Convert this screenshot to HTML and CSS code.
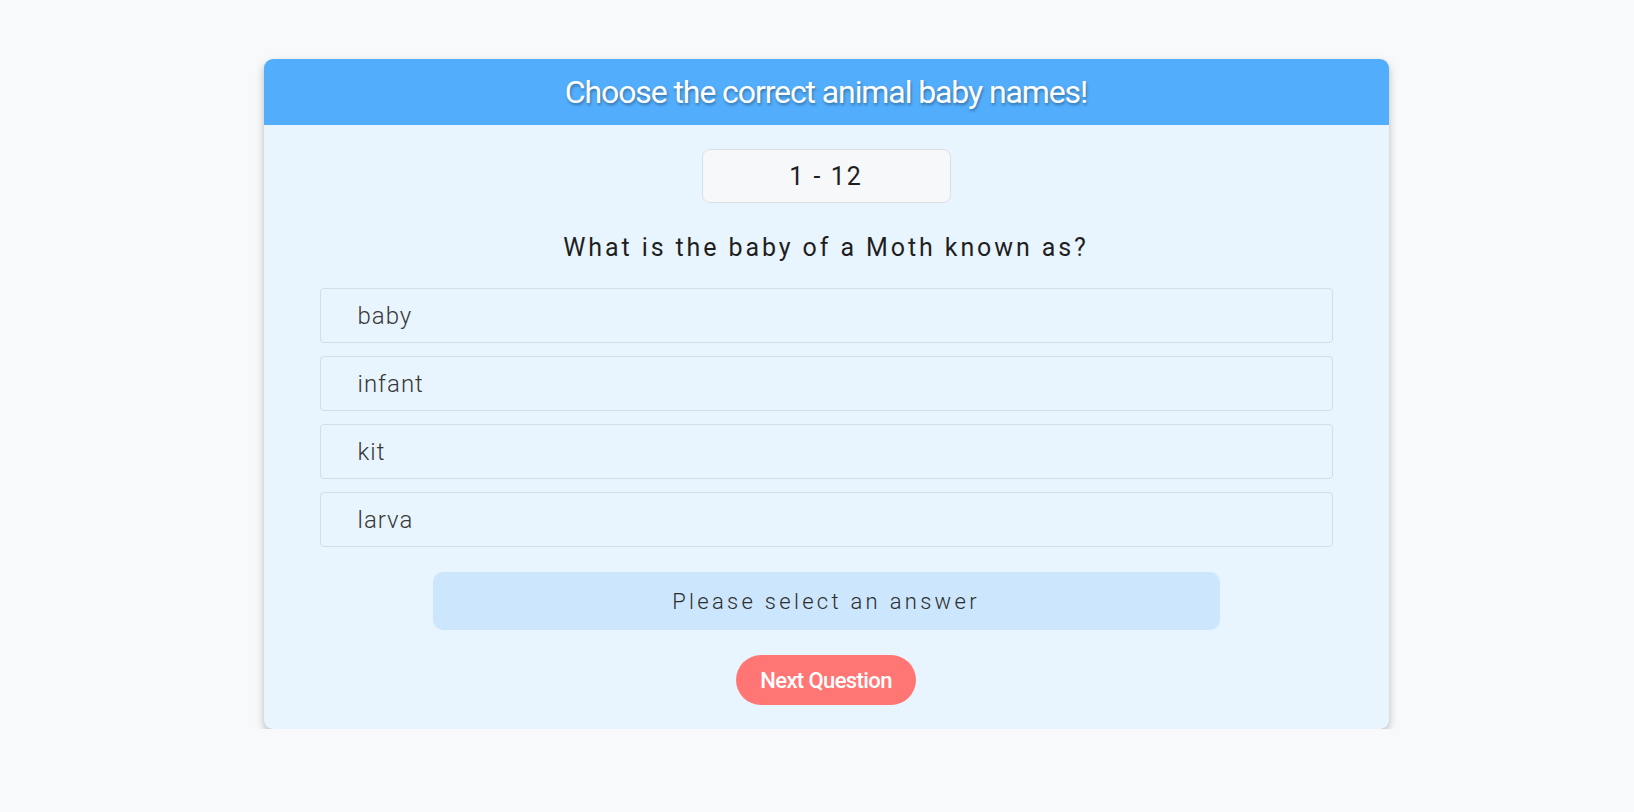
FILE: index.html
```html
<!DOCTYPE html>
<html lang="en">
<head>
<meta charset="utf-8">
<title>Animal Baby Names Quiz</title>
<link rel="stylesheet" href="styles.css">
</head>
<body>
<div class="page">
  <div class="card">
    <div class="card-header">
      <h1 class="title">Choose the correct animal baby names!</h1>
    </div>
    <div class="card-body">
      <div class="counter">1 - 12</div>
      <h2 class="question">What is the baby of a Moth known as?</h2>
      <ul class="options">
        <li class="option">baby</li>
        <li class="option">infant</li>
        <li class="option">kit</li>
        <li class="option">larva</li>
      </ul>
      <div class="feedback">Please select an answer</div>
      <button class="next-btn">Next Question</button>
    </div>
  </div>
</div>
</body>
</html>
```
FILE: styles.css
```css
* { box-sizing: border-box; }
html, body { margin: 0; padding: 0; }
body {
  background: #f8f9fb;
  font-family: Roboto, "Liberation Sans", sans-serif;
  color: #222;
}
.page {
  display: flex;
  justify-content: center;
  padding-top: 59px;
}
.card {
  width: 1125px;
  margin-left: 18px;
  background: #e9f5fe;
  border-radius: 9px;
  overflow: hidden;
  box-shadow: 0 4px 8px rgba(0,0,0,0.25);
}
.card-header {
  background: #52aefd;
  height: 66px;
  display: flex;
  align-items: center;
  justify-content: center;
}
.title {
  margin: 0;
  color: #fff;
  font-size: 32px;
  font-weight: 400;
  letter-spacing: -1.1px;
  text-shadow: 1px 2px 3px rgba(0,0,0,0.35);
}
.card-body {
  padding: 24px 56px 24px;
  display: flex;
  flex-direction: column;
  align-items: center;
}
.counter {
  width: 249px;
  height: 54px;
  background: #f6f8fa;
  border: 1px solid #dcdfe2;
  border-radius: 8px;
  display: flex;
  align-items: center;
  justify-content: center;
  font-size: 25px;
  letter-spacing: 2px;
  color: #1e1e1e;
}
.question {
  margin: 30px 0 25px;
  font-size: 25px;
  font-weight: 400;
  letter-spacing: 2.9px;
  color: #1f1f1f;
  line-height: 30px;
}
.options {
  list-style: none;
  margin: 0;
  padding: 0;
  width: 100%;
  display: flex;
  flex-direction: column;
  gap: 13px;
}
.option {
  height: 55px;
  border: 1px solid #d2dde8;
  border-radius: 4px;
  display: flex;
  align-items: center;
  padding-left: 37px;
  font-size: 24px;
  font-weight: 300;
  letter-spacing: 1px;
  color: #383838;
}
.feedback {
  margin-top: 25px;
  width: 787px;
  height: 58px;
  background: #cce6fd;
  border-radius: 10px;
  display: flex;
  align-items: center;
  justify-content: center;
  font-size: 22px;
  font-weight: 300;
  letter-spacing: 3.3px;
  color: #2d2d2d;
}
.next-btn {
  margin-top: 25px;
  width: 180px;
  height: 50px;
  border: none;
  border-radius: 25px;
  background: #ff7675;
  color: #fff;
  font-family: Roboto, "Liberation Sans", sans-serif;
  font-size: 22px;
  font-weight: 500;
  letter-spacing: -0.6px;
  cursor: pointer;
}
```
